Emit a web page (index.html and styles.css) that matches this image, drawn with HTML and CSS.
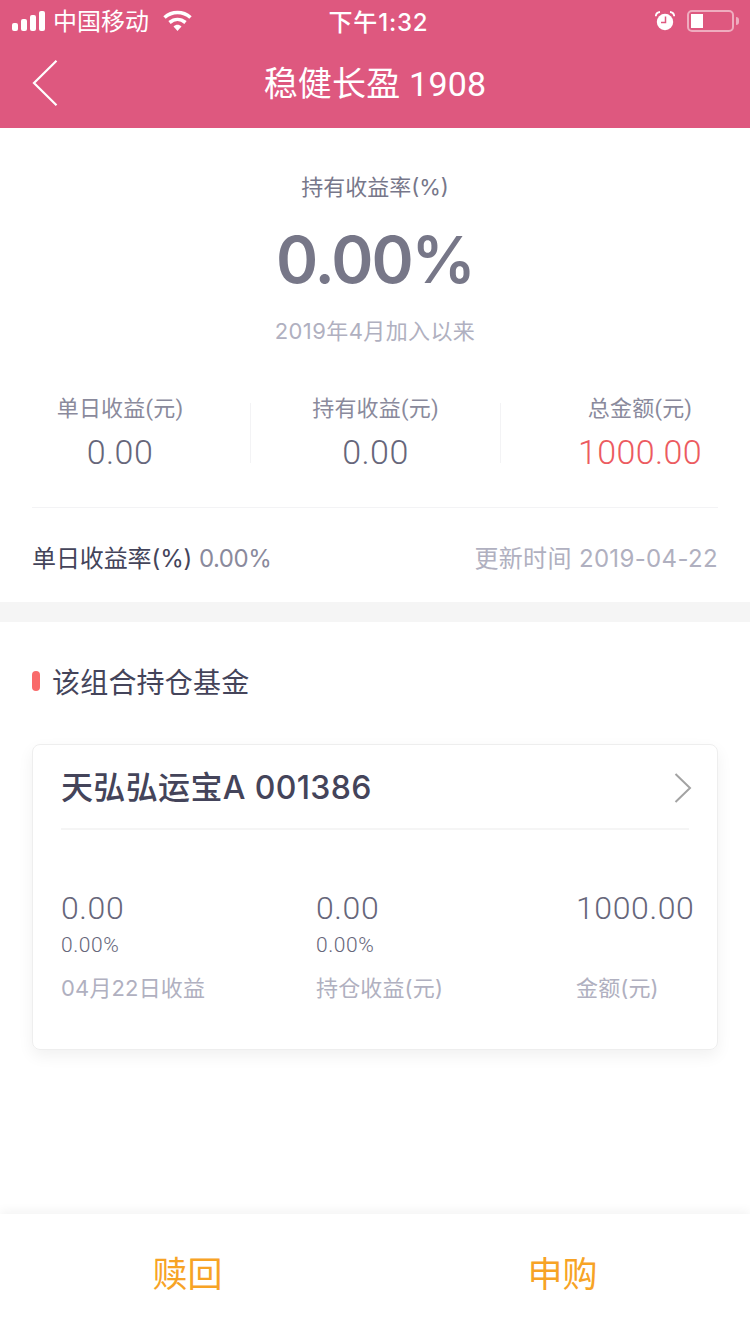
FILE: index.html
```html
<!DOCTYPE html>
<html>
<head>
    <title>稳健长盈 1908</title>
    <meta charset="utf-8">
    <link rel="stylesheet" href="styles.css">
</head>
<body>
<div class="page">
    <div class="header">
        <div class="status">
            <div class="status-left">
                <svg class="signal" width="34" height="20" viewBox="0 0 34 20">
                    <rect x="0" y="12" width="6" height="8" rx="2" fill="#fff"/>
                    <rect x="9" y="8" width="6" height="12" rx="2" fill="#fff"/>
                    <rect x="18" y="4" width="6" height="16" rx="2" fill="#fff"/>
                    <rect x="27" y="0" width="6" height="20" rx="2" fill="#fff"/>
                </svg>
                <span class="carrier">中国移动</span>
                <svg class="wifi" width="30" height="22" viewBox="0 0 30 22">
                    <path d="M1.5 7.5C9 0.8 20 0.8 27.5 7.5" fill="none" stroke="#fff" stroke-width="3.6"/>
                    <path d="M6.5 12.5C11.5 8.4 17.5 8.4 22.5 12.5" fill="none" stroke="#fff" stroke-width="3.6"/>
                    <path d="M10.5 16.5C13 14.2 16 14.2 18.5 16.5L14.5 21Z" fill="#fff"/>
                </svg>
            </div>
            <span class="clock">下午1:32</span>
            <div class="status-right">
                <svg class="alarm" width="20" height="20" viewBox="0 0 20 20">
                    <circle cx="10" cy="11" r="8.2" fill="#fff"/>
                    <path d="M10.5 5.5V11.5H6" fill="none" stroke="#de587f" stroke-width="1.5"/>
                    <path d="M0.8 5.2C1 2.6 2.6 1.2 5 1M19.2 5.2C19 2.6 17.4 1.2 15 1" fill="none" stroke="#fff" stroke-width="1.8"/>
                </svg>
                <div class="battery"><div class="battery-fill"></div></div>
                <div class="battery-cap"></div>
            </div>
        </div>
        <div class="nav">
            <svg class="back" width="26" height="46" viewBox="0 0 26 46">
                <path d="M24.5 0.8L2 23L24.5 45.2" fill="none" stroke="#fff" stroke-width="2.2"/>
            </svg>
            <div class="nav-title">稳健长盈 1908</div>
        </div>
    </div>

    <div class="summary">
        <div class="rate-label">持有收益率(%)</div>
        <div class="rate-value">0.00%</div>
        <div class="rate-since">2019年4月加入以来</div>
        <div class="stats">
            <div class="stat stat-first">
                <div class="stat-label">单日收益(元)</div>
                <div class="stat-value">0.00</div>
            </div>
            <div class="stat stat-mid">
                <div class="stat-label">持有收益(元)</div>
                <div class="stat-value">0.00</div>
            </div>
            <div class="stat stat-last">
                <div class="stat-label">总金额(元)</div>
                <div class="stat-value red">1000.00</div>
            </div>
        </div>
        <div class="daily">
            <div><span class="daily-label">单日收益率(%)</span> <span class="daily-value">0.00%</span></div>
            <div class="updated">更新时间 2019-04-22</div>
        </div>
    </div>

    <div class="holdings">
        <div class="section-title"><i class="mark"></i>该组合持仓基金</div>
        <div class="card">
            <div class="card-head">
                <span class="fund-name">天弘弘运宝A 001386</span>
                <svg class="arrow" width="18" height="30" viewBox="0 0 18 30">
                    <path d="M1.5 1L16 15L1.5 29" fill="none" stroke="#a3a3a3" stroke-width="2"/>
                </svg>
            </div>
            <div class="card-body">
                <div class="cell cell-1">
                    <div class="cell-value">0.00</div>
                    <div class="cell-rate">0.00%</div>
                    <div class="cell-label">04月22日收益</div>
                </div>
                <div class="cell cell-2">
                    <div class="cell-value">0.00</div>
                    <div class="cell-rate">0.00%</div>
                    <div class="cell-label">持仓收益(元)</div>
                </div>
                <div class="cell cell-3">
                    <div class="cell-value">1000.00</div>
                    <div class="cell-rate"></div>
                    <div class="cell-label">金额(元)</div>
                </div>
            </div>
        </div>
    </div>

    <div class="footer">
        <div class="action">赎回</div>
        <div class="action">申购</div>
    </div>
</div>
</body>
</html>
```

FILE: styles.css
```css
html, body {
    margin: 0;
    padding: 0;
    background: #fff;
}
.page {
    width: 750px;
    height: 1334px;
    display: flex;
    flex-direction: column;
    overflow: hidden;
    font-family: "Roboto", "Noto Sans CJK SC", sans-serif;
}
.header {
    height: 128px;
    background-color: #de587f;
    color: #fff;
}
.status {
    height: 40px;
    display: grid;
    grid-template-columns: 1fr auto 1fr;
    align-items: center;
    padding: 0 11px 0 12px;
}
.status-left {
    display: flex;
    align-items: center;
}
.signal {
    margin-right: 7px;
}
.carrier {
    font-size: 24px;
    line-height: 40px;
    margin-top: 2px;
}
.wifi {
    margin-left: 14px;
}
.clock {
    font-family: "Inter", "Noto Sans CJK SC", sans-serif;
    font-size: 24px;
    font-weight: 500;
    letter-spacing: 0.8px;
    margin: 0 0 2px 6px;
}
.status-right {
    display: flex;
    align-items: center;
    justify-content: flex-end;
}
.alarm {
    margin-right: 12px;
}
.battery {
    box-sizing: border-box;
    width: 47px;
    height: 22px;
    border: 2px solid rgba(255, 255, 255, 0.5);
    border-radius: 5px;
    padding: 2px;
}
.battery-fill {
    width: 12px;
    height: 14px;
    background: #fff;
}
.battery-cap {
    width: 3px;
    height: 8px;
    margin-left: 2px;
    background: rgba(255, 255, 255, 0.5);
    border-radius: 0 3px 3px 0;
}
.nav {
    height: 88px;
    display: flex;
    align-items: center;
    padding-left: 32px;
    position: relative;
}
.back {
    margin-bottom: 2px;
}
.nav-title {
    position: absolute;
    left: 0;
    right: 0;
    top: 0;
    line-height: 88px;
    text-align: center;
    font-size: 34px;
    letter-spacing: 0.2px;
}

.summary {
    padding-top: 44px;
}
.rate-label {
    font-family: "Inter", "Noto Sans CJK SC", sans-serif;
    text-align: center;
    font-size: 22px;
    line-height: 30px;
    color: #77778a;
}
.rate-value {
    font-family: "Inter", "Noto Sans CJK SC", sans-serif;
    text-align: center;
    font-size: 64px;
    line-height: 80px;
    font-weight: 600;
    letter-spacing: -2px;
    color: #777788;
    margin-top: 18px;
}
.rate-since {
    font-family: "Inter", "Noto Sans CJK SC", sans-serif;
    text-align: center;
    font-size: 22px;
    line-height: 30px;
    letter-spacing: 0.4px;
    color: #b0b0c0;
    margin-top: 16px;
}
.stats {
    display: grid;
    grid-template-columns: 250px 250px 250px;
    margin-top: 57px;
}
.stat {
    height: 60px;
    text-align: center;
    border-left: 1px solid #f3f3f5;
    box-sizing: border-box;
}
.stat-first {
    border-left: 0;
    padding-right: 10px;
}
.stat-last {
    padding-left: 29px;
}
.stat-label {
    font-size: 22px;
    line-height: 30px;
    letter-spacing: 0.2px;
    color: #8a8a9c;
    margin-top: -9px;
}
.stat-value {
    font-size: 34px;
    font-weight: 300;
    line-height: 44px;
    letter-spacing: 0.4px;
    color: #66667a;
    margin-top: 6px;
}
.red {
    color: #ec5b60;
}
.daily {
    font-family: "Inter", "Noto Sans CJK SC", sans-serif;
    margin: 44px 32px 0;
    border-top: 1px solid #f3f3f5;
    box-sizing: border-box;
    height: 95px;
    padding-top: 2px;
    display: flex;
    justify-content: space-between;
    align-items: center;
    font-size: 24px;
}
.daily-label {
    letter-spacing: -0.1px;
    color: #44445a;
}
.daily-value {
    letter-spacing: -0.5px;
    color: #8a8a9c;
}
.updated {
    letter-spacing: 0.35px;
    color: #b0b0c0;
}

.holdings {
    border-top: 20px solid #f5f5f5;
    padding: 0 32px;
}
.section-title {
    display: flex;
    align-items: center;
    height: 118px;
    font-size: 28px;
    letter-spacing: 0.2px;
    color: #44445a;
}
.mark {
    width: 8px;
    height: 20px;
    border-radius: 4px;
    background: #f96a6a;
    margin-right: 12px;
}
.card {
    box-sizing: border-box;
    height: 306px;
    margin-top: 4px;
    border: 1px solid #eeeeee;
    border-radius: 8px;
    box-shadow: 0 6px 16px rgba(0, 0, 0, 0.06);
    padding: 0 28px;
}
.card-head {
    box-sizing: border-box;
    height: 85px;
    padding-bottom: 4px;
    display: flex;
    justify-content: space-between;
    align-items: center;
    border-bottom: 2px solid #f5f5f5;
}
.fund-name {
    font-family: "Inter", "Noto Sans CJK SC", sans-serif;
    font-size: 32px;
    font-weight: 500;
    letter-spacing: 0.35px;
    color: #44445a;
}
.arrow {
    margin: 6px -3px 0 0;
}
.card-body {
    display: flex;
    padding-top: 58px;
}
.cell {
    flex: none;
}
.cell-1, .cell-2 {
    width: 255px;
}
.cell-3 {
    margin-left: 5px;
}
.cell-value {
    font-size: 32px;
    font-weight: 300;
    line-height: 40px;
    letter-spacing: 0.6px;
    color: #66667a;
}
.cell-rate {
    font-size: 21px;
    font-weight: 300;
    line-height: 26px;
    height: 26px;
    margin-top: 4px;
    letter-spacing: 0.6px;
    color: #66667a;
}
.cell-label {
    font-family: "Inter", "Noto Sans CJK SC", sans-serif;
    font-size: 22px;
    line-height: 30px;
    letter-spacing: 0.15px;
    margin-top: 15px;
    color: #b0b0c0;
}

.footer {
    margin-top: auto;
    height: 120px;
    display: flex;
    box-shadow: 0 -3px 10px rgba(0, 0, 0, 0.05);
}
.action {
    flex: 1;
    text-align: center;
    line-height: 123px;
    font-size: 35px;
    color: #f7a325;
}
```
